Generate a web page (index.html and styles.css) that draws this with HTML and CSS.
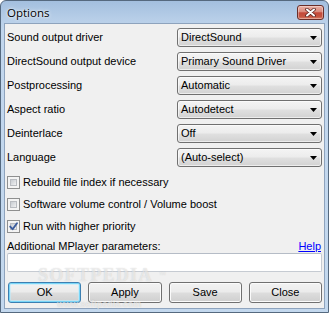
FILE: index.html
```html
<!DOCTYPE html>
<html>
<head>
<meta charset="utf-8">
<title>Options</title>
<link rel="stylesheet" href="styles.css">
</head>
<body>
<div class="window">
  <div class="titlebar">
    <span class="title">Options</span>
    <button class="close" type="button" aria-label="Close">
      <svg width="13" height="9" viewBox="0 0 13 9">
        <path d="M3 1.5 L10 7.5 M10 1.5 L3 7.5" stroke="#5a2420" stroke-width="3.6" stroke-linecap="round" fill="none"/>
        <path d="M3 1.5 L10 7.5 M10 1.5 L3 7.5" stroke="#ffffff" stroke-width="2" stroke-linecap="round" fill="none"/>
      </svg>
    </button>
  </div>
  <div class="client">
    <div class="settings">
      <span class="label">Sound output driver</span>
      <div class="combo"><span>DirectSound</span><svg class="arrow" width="7" height="4" viewBox="0 0 7 4"><path d="M0 0 H7 L3.5 4 Z" fill="#000"/></svg></div>
      <span class="label">DirectSound output device</span>
      <div class="combo"><span>Primary Sound Driver</span><svg class="arrow" width="7" height="4" viewBox="0 0 7 4"><path d="M0 0 H7 L3.5 4 Z" fill="#000"/></svg></div>
      <span class="label">Postprocessing</span>
      <div class="combo"><span>Automatic</span><svg class="arrow" width="7" height="4" viewBox="0 0 7 4"><path d="M0 0 H7 L3.5 4 Z" fill="#000"/></svg></div>
      <span class="label">Aspect ratio</span>
      <div class="combo"><span>Autodetect</span><svg class="arrow" width="7" height="4" viewBox="0 0 7 4"><path d="M0 0 H7 L3.5 4 Z" fill="#000"/></svg></div>
      <span class="label">Deinterlace</span>
      <div class="combo"><span>Off</span><svg class="arrow" width="7" height="4" viewBox="0 0 7 4"><path d="M0 0 H7 L3.5 4 Z" fill="#000"/></svg></div>
      <span class="label">Language</span>
      <div class="combo"><span>(Auto-select)</span><svg class="arrow" width="7" height="4" viewBox="0 0 7 4"><path d="M0 0 H7 L3.5 4 Z" fill="#000"/></svg></div>
    </div>
    <div class="checks">
      <div class="check"><span class="box"><span class="inner"></span></span><span>Rebuild file index if necessary</span></div>
      <div class="check"><span class="box"><span class="inner"></span></span><span>Software volume control / Volume boost</span></div>
      <div class="check"><span class="box checked"><span class="inner"></span><svg class="tick" width="11" height="11" viewBox="0 0 11 11"><path d="M2.2 5.6 L4.6 8.2 L9 2.2" stroke="#3b5c9c" stroke-width="1.9" fill="none" stroke-linecap="round" stroke-linejoin="round"/></svg></span><span>Run with higher priority</span></div>
    </div>
    <div class="param-head"><span>Additional MPlayer parameters:</span><a class="help" href="#">Help</a></div>
    <div class="input"></div>
    <div class="buttons">
      <button class="btn default" type="button">OK</button>
      <button class="btn" type="button">Apply</button>
      <button class="btn" type="button">Save</button>
      <button class="btn" type="button">Close</button>
    </div>
    <div class="watermark"><span class="wm-big">SOFTPEDIA</span><span class="wm-tm">™</span></div>
    <div class="wm-url">www.softpedia.com</div>
  </div>
</div>
</body>
</html>
```

FILE: styles.css
```css
* { box-sizing: border-box; }
html, body { margin: 0; padding: 0; }
body {
  width: 329px;
  height: 313px;
  overflow: hidden;
  background: #ffffff;
  font-family: "Liberation Sans", Arial, sans-serif;
  font-size: 11px;
  color: #000;
}
.window {
  width: 329px;
  height: 313px;
  display: flex;
  flex-direction: column;
  border: 1px solid #55697f;
  border-radius: 6px 6px 0 0;
  background: linear-gradient(#a3bfdf 0px, #b7cee8 18px, #c1d6ed 30px, #c3d8ee 100%);
  padding: 0 3px 3px 3px;
}
.titlebar {
  height: 22px;
  flex: none;
  display: flex;
  align-items: center;
  justify-content: space-between;
  padding: 0 1px 0 3px;
}
.title {
  font-family: "Open Sans", "Noto Sans", sans-serif;
  font-size: 11.5px;
  color: #000;
  text-shadow: 0 0 4px rgba(255,255,255,0.9), 0 0 2px rgba(255,255,255,0.8);
}
.close {
  width: 27px;
  height: 15px;
  margin-top: 1px;
  padding: 0;
  border: 1px solid #6a2e29;
  border-radius: 3px;
  background: linear-gradient(#eab1a6 0%, #da8a7c 45%, #c4493a 52%, #c55440 80%, #d97d66 100%);
  box-shadow: inset 0 0 0 1px rgba(255,255,255,0.35);
  display: flex;
  align-items: center;
  justify-content: center;
}
.client {
  flex: 1;
  position: relative;
  background: #f0f0f0;
  border: 1px solid #8ea3bd;
  padding: 4px 2px 4px 2px;
  display: flex;
  flex-direction: column;
}
.settings {
  display: grid;
  grid-template-columns: 170px 145px;
  row-gap: 5px;
  align-items: center;
}
.label { line-height: 13px; }
.combo {
  height: 19px;
  border: 1px solid #707070;
  border-radius: 3px;
  background: linear-gradient(#f4f4f4 0%, #ececec 48%, #e0e0e0 52%, #d2d2d2 100%);
  box-shadow: inset 0 0 0 1px rgba(255,255,255,0.6);
  display: flex;
  align-items: center;
  justify-content: space-between;
  padding: 0 4px 0 3px;
  line-height: 13px;
}
.arrow { display: block; flex: none; margin-top: 1px; }
.checks {
  margin-top: 7px;
  display: flex;
  flex-direction: column;
  gap: 5px;
}
.check {
  height: 17px;
  display: flex;
  align-items: center;
  gap: 3px;
  line-height: 13px;
}
.box {
  position: relative;
  width: 13px;
  height: 13px;
  flex: none;
  border: 1px solid #8e8f8f;
  background: #f4f4f4;
  padding: 2px;
}
.inner {
  display: block;
  width: 7px;
  height: 7px;
  border: 1px solid #b9bcc1;
  background: linear-gradient(135deg, #c8ccd2 0%, #dfe1e4 60%, #f1f2f3 100%);
}
.tick {
  position: absolute;
  left: 0;
  top: 0;
}
.param-head {
  margin-top: 5px;
  display: flex;
  justify-content: space-between;
  line-height: 13px;
}
.help {
  color: #0000ff;
  text-decoration: underline;
  margin-right: 1px;
}
.input {
  height: 19px;
  background: #ffffff;
  border: 1px solid #c6cbd2;
  border-top-color: #b5bcc6;
  border-radius: 2px;
}
.buttons {
  margin-top: 10px;
  display: grid;
  grid-template-columns: repeat(4, 1fr);
  gap: 7px;
  padding-left: 1px;
}
.btn {
  height: 21px;
  padding: 0;
  border: 1px solid #707070;
  border-radius: 3px;
  background: linear-gradient(#f2f2f2 0%, #ebebeb 48%, #dddddd 52%, #cfcfcf 100%);
  box-shadow: inset 0 0 0 1px #fbfbfb;
  font-family: "Liberation Sans", Arial, sans-serif;
  font-size: 11px;
  line-height: 11px;
  color: #000;
}
.btn.default {
  border-color: #3c7fb1;
  box-shadow: inset 0 0 0 1px #79d6f8, inset 0 0 0 2px rgba(190,235,252,0.6);
}
.watermark {
  position: absolute;
  left: 33px;
  top: 244px;
  line-height: 14px;
  height: 14px;
  pointer-events: none;
  white-space: nowrap;
}
.wm-big {
  font-family: "Liberation Serif", "Times New Roman", serif;
  font-weight: bold;
  font-size: 18px;
  letter-spacing: 1.3px;
  color: rgba(255,255,255,0.55);
  text-shadow: 0 0 1px rgba(120,120,120,0.35);
}
.wm-tm {
  font-family: "Liberation Sans", Arial, sans-serif;
  font-size: 7px;
  vertical-align: top;
  margin-left: 6px;
  color: rgba(255,255,255,0.6);
  text-shadow: 0 0 1px rgba(120,120,120,0.35);
}
.wm-url {
  position: absolute;
  left: 52px;
  top: 276px;
  font-family: "Liberation Sans", Arial, sans-serif;
  font-weight: bold;
  font-size: 9px;
  line-height: 9px;
  color: rgba(255,255,255,0.55);
  text-shadow: 0 0 1px rgba(120,120,120,0.35);
  pointer-events: none;
}
```
